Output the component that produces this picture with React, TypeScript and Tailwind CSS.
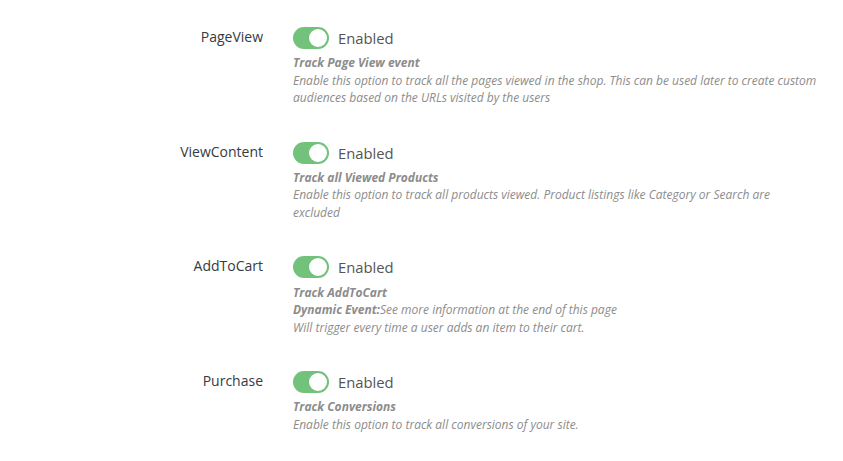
import React from "react";

interface EventRowProps {
  label: string;
  title: string;
  children: React.ReactNode;
}

const Toggle = () => (
  <div className="flex h-[22px] w-[36px] items-center justify-end rounded-full bg-[#72c27b] px-[2px]">
    <div className="h-[18px] w-[18px] rounded-full bg-white" />
  </div>
);

const EventRow: React.FC<EventRowProps> = ({ label, title, children }) => {
  return (
    <div className="flex">
      <div className="w-[263px] text-right text-[14px] leading-[20px] text-[#363a41]">{label}</div>
      <div className="ml-[30px] w-[524px]">
        <div className="flex items-center gap-[9px]">
          <Toggle />
          <span className="text-[14.8px] text-[#555]">Enabled</span>
        </div>
        <div className="mt-[5px] text-[12px] italic leading-[17.5px] text-[#8c8c8c]">
          <p className="font-bold">{title}</p>
          {children}
        </div>
      </div>
    </div>
  );
};

export default function App() {
  return (
    <div className="flex min-h-[461px] flex-col gap-[35px] bg-white pt-[27px]" style={{ fontFamily: '"Open Sans", sans-serif' }}>
      <EventRow label="PageView" title="Track Page View event">
        <p>
          Enable this option to track all the pages viewed in the shop. This can be used later to create custom audiences based
          on the URLs visited by the users
        </p>
      </EventRow>
      <EventRow label="ViewContent" title="Track all Viewed Products">
        <p>Enable this option to track all products viewed. Product listings like Category or Search are excluded</p>
      </EventRow>
      <EventRow label="AddToCart" title="Track AddToCart">
        <p>
          <span className="font-bold">Dynamic Event:</span>See more information at the end of this page
        </p>
        <p>Will trigger every time a user adds an item to their cart.</p>
      </EventRow>
      <EventRow label="Purchase" title="Track Conversions">
        <p>Enable this option to track all conversions of your site.</p>
      </EventRow>
    </div>
  );
}
